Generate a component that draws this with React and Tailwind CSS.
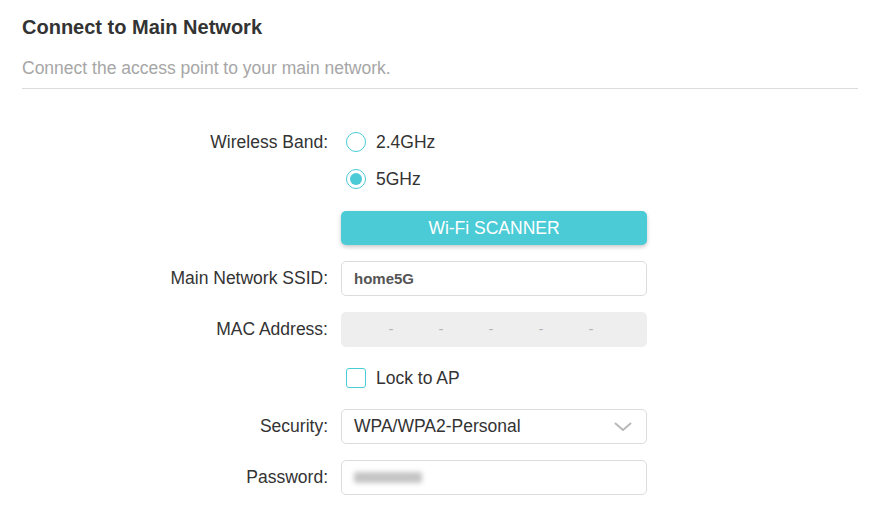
import React, { useState } from "react";

const Label = ({ children }) => (
  <div className="w-[328px] shrink-0 text-right text-[17.5px] text-[#333]">{children}</div>
);

const Radio = ({ checked, onClick, label }) => (
  <button type="button" onClick={onClick} className="flex items-center ml-[5px]">
    <span className="w-[20px] h-[20px] rounded-full border-[1.5px] border-[#4acbd6] flex items-center justify-center">
      {checked && <span className="w-[12px] h-[12px] rounded-full bg-[#4acbd6]" />}
    </span>
    <span className="ml-[10px] text-[17.5px] text-[#333]">{label}</span>
  </button>
);

export default function App() {
  const [band, setBand] = useState("5");
  const [lock, setLock] = useState(false);

  return (
    <div className="w-[873px] h-[507px] bg-white font-['Liberation_Sans',Arial,sans-serif] overflow-hidden">
      <div className="px-[22px]">
        <h1 className="pt-[15px] text-[20px] leading-[24px] font-bold text-[#333]">
          Connect to Main Network
        </h1>
        <p className="mt-[19px] text-[17.5px] leading-[20px] text-[#a6a6a6]">
          Connect the access point to your main network.
        </p>
        <div className="mt-[10px] h-px w-[836px] bg-[#dcdcdc]" />
      </div>

      {/* wireless band */}
      <div className="mt-[43px] flex items-center h-[20px]">
        <Label>Wireless Band:</Label>
        <div className="ml-[13px]">
          <Radio checked={band === "2.4"} onClick={() => setBand("2.4")} label="2.4GHz" />
        </div>
      </div>
      <div className="mt-[17px] flex items-center h-[20px]">
        <div className="w-[328px] shrink-0" />
        <div className="ml-[13px]">
          <Radio checked={band === "5"} onClick={() => setBand("5")} label="5GHz" />
        </div>
      </div>

      {/* scanner */}
      <div className="mt-[22px] flex">
        <div className="w-[328px] shrink-0" />
        <button
          type="button"
          className="ml-[13px] w-[306px] h-[34px] rounded-[5px] bg-[#4acbd6] text-white text-[17.5px] shadow-[0_2px_4px_rgba(0,0,0,0.22)]"
        >
          Wi-Fi SCANNER
        </button>
      </div>

      {/* ssid */}
      <div className="mt-[16px] flex items-center">
        <Label>Main Network SSID:</Label>
        <input
          defaultValue="home5G"
          className="ml-[13px] w-[306px] h-[35px] rounded-[5px] border border-[#dcdcdc] pl-[12px] text-[15px] font-bold text-[#555] outline-none"
        />
      </div>

      {/* mac */}
      <div className="mt-[16px] flex items-center">
        <Label>MAC Address:</Label>
        <div className="ml-[13px] w-[306px] h-[35px] rounded-[5px] bg-[#eeeeee] flex items-center justify-center pr-[6px] text-[15px] text-[#b5b5b5]">
          {["-", "-", "-", "-", "-"].map((d, i) => (
            <span key={i} className="w-[50px] text-center">{d}</span>
          ))}
        </div>
      </div>

      {/* lock */}
      <div className="mt-[21px] flex items-center h-[20px]">
        <div className="w-[328px] shrink-0" />
        <button type="button" onClick={() => setLock(!lock)} className="ml-[18px] flex items-center">
          <span className="w-[20px] h-[20px] rounded-[3px] border-[1.5px] border-[#4acbd6] flex items-center justify-center">
            {lock && <span className="w-[10px] h-[10px] bg-[#4acbd6]" />}
          </span>
          <span className="ml-[10px] text-[17.5px] text-[#333]">Lock to AP</span>
        </button>
      </div>

      {/* security */}
      <div className="mt-[21px] flex items-center">
        <Label>Security:</Label>
        <div className="ml-[13px] w-[306px] h-[35px] rounded-[5px] border border-[#dcdcdc] pl-[12px] pr-[14px] flex items-center justify-between">
          <span className="text-[17.5px] text-[#333]">WPA/WPA2-Personal</span>
          <svg width="18" height="10" viewBox="0 0 18 10" fill="none">
            <path d="M1.5 1.5L9 8L16.5 1.5" stroke="#b9b9b9" strokeWidth="2" strokeLinecap="round" strokeLinejoin="round" />
          </svg>
        </div>
      </div>

      {/* password */}
      <div className="mt-[16px] flex items-center">
        <Label>Password:</Label>
        <div className="ml-[13px] w-[306px] h-[35px] rounded-[5px] border border-[#dcdcdc] pl-[12px] flex items-center">
          <span className="block w-[68px] h-[11px] rounded-[2px] bg-[#c4c4c4] blur-[2.5px]" />
        </div>
      </div>
    </div>
  );
}
